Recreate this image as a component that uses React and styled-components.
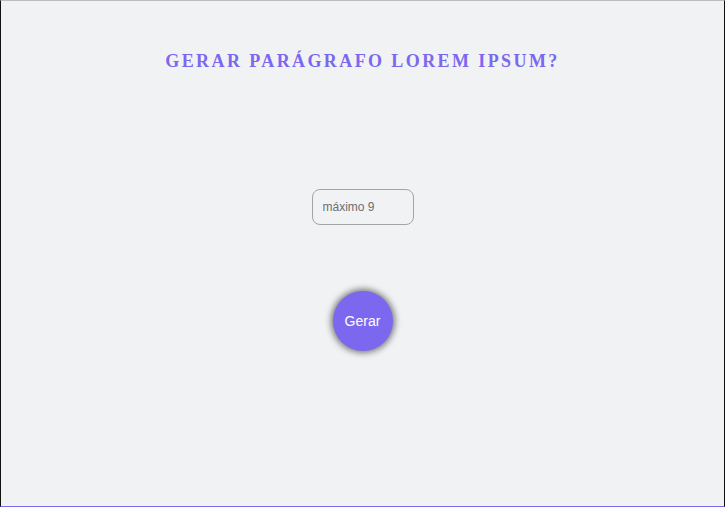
import React from "react";
import styled, { createGlobalStyle } from "styled-components";

const GlobalStyle = createGlobalStyle`
  html, body { margin: 0; padding: 0; }
  body { background: #f1f2f4; }
  * { box-sizing: border-box; }
`;

const Page = styled.main`
  height: 507px;
  background: #f1f2f4;
  border-top: 1px solid #bdbdbd;
  border-left: 1px solid #111;
  border-right: 1px solid #111;
  border-bottom: 1px solid #7b68ee;
  display: flex;
  flex-direction: column;
  align-items: center;
`;

const Title = styled.h1`
  margin: 50px 0 0;
  font-family: "Liberation Serif", serif;
  font-weight: bold;
  font-size: 18px;
  line-height: 20px;
  letter-spacing: 2.4px;
  color: #7b68ee;
  text-transform: uppercase;
`;

const Input = styled.input`
  margin-top: 118px;
  width: 102px;
  height: 36px;
  padding: 0 10px;
  border: 1px solid #a4a4a4;
  border-radius: 8px;
  background: #f1f2f4;
  font-family: "Liberation Sans", Arial, sans-serif;
  font-size: 12px;
  color: #333;
  outline: none;
  &::placeholder { color: #6e6e6e; }
`;

const Button = styled.button`
  margin-top: 66px;
  width: 60px;
  height: 60px;
  border-radius: 50%;
  border: none;
  background: #7b68ee;
  color: #fff;
  font-family: "Liberation Sans", Arial, sans-serif;
  font-size: 14px;
  box-shadow: 0 0 6px 2px rgba(0, 0, 0, 0.5);
  cursor: pointer;
`;

export default function App() {
  return (
    <>
      <GlobalStyle />
      <Page>
        <Title>Gerar parágrafo lorem ipsum?</Title>
        <Input type="number" placeholder="máximo 9" />
        <Button>Gerar</Button>
      </Page>
    </>
  );
}
